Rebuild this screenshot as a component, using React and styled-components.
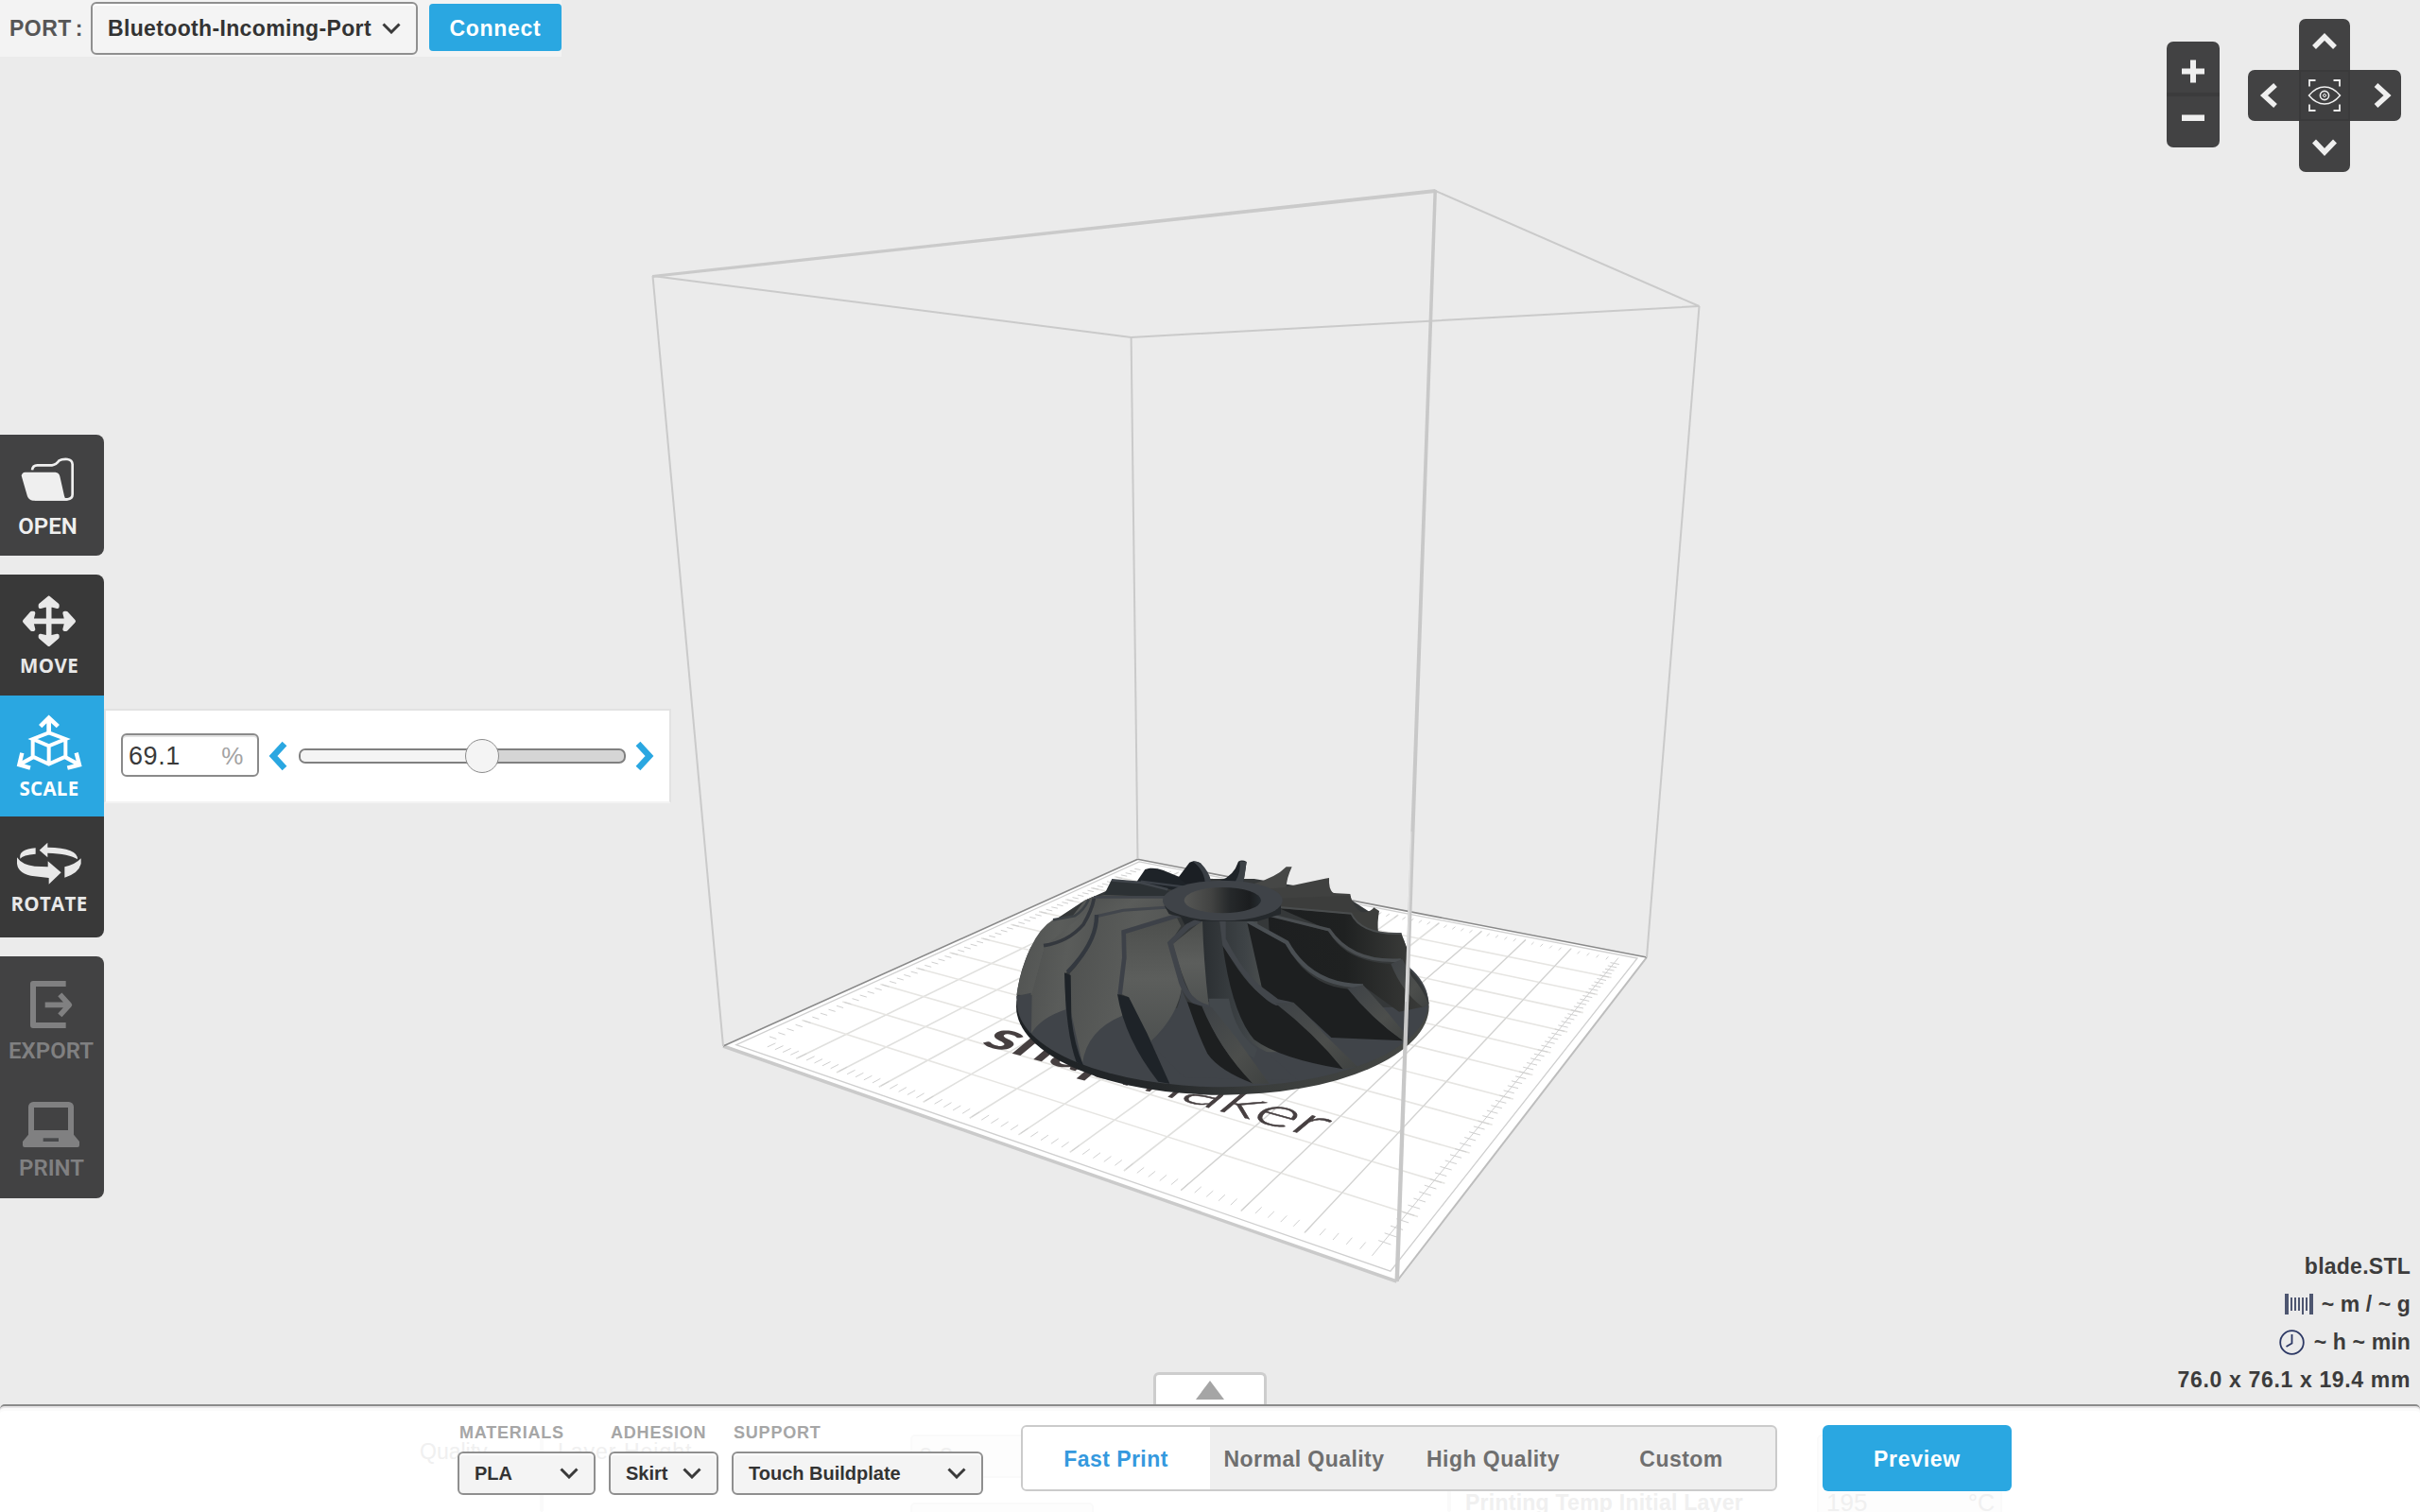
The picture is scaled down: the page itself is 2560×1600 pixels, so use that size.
import React from "react";
import styled, { createGlobalStyle } from "styled-components";

const GlobalStyle = createGlobalStyle`
  body { margin: 0; background: #ebebeb; overflow: hidden; }
  *, *::before, *::after { box-sizing: border-box; }
  button, input { font: inherit; }
`;

const ui = '"Liberation Sans", Arial, sans-serif';

const Page = styled.div`
  width: 2560px;
  height: 1600px;
  display: grid;
  grid-template-rows: 1486px 114px;
  background: #ebebeb;
  color: #333;
  font-family: ${ui};
  overflow: hidden;
`;

const Stage = styled.main`
  display: grid;
  grid-template: 1486px / 2560px;
  > * { grid-area: 1 / 1; }
`;

const SceneSvg = styled.svg`
  display: block;
  width: 2560px;
  height: 1486px;
`;

/* ---------- port bar ---------- */
const PortBar = styled.div`
  justify-self: start;
  align-self: start;
  display: flex;
  align-items: flex-start;
  width: 594px;
  height: 60px;
  background: #f3f3f3;
`;

const PortLabel = styled.label`
  width: 96px;
  padding-left: 10px;
  font-size: 23px;
  font-weight: 700;
  line-height: 61px;
  letter-spacing: 0.5px;
  word-spacing: -3px;
  color: #565656;
`;

const Select = styled.button`
  display: flex;
  align-items: center;
  justify-content: space-between;
  width: ${(p) => p.$w}px;
  height: ${(p) => p.$h}px;
  margin: ${(p) => p.$mt || 0}px 0 0;
  padding: ${(p) => p.$pad};
  border: 2px solid #8f8f8f;
  border-radius: 6px;
  background: #f4f4f4;
  box-shadow: inset 0 2px 0 #fff;
  color: #333;
  font-weight: 700;
  font-size: ${(p) => p.$fs}px;
  letter-spacing: ${(p) => p.$ls || 0}px;
  white-space: nowrap;
`;

const BlueButton = styled.button`
  width: ${(p) => p.$w}px;
  height: ${(p) => p.$h}px;
  margin: ${(p) => p.$m};
  padding: 2px 0 0;
  border: 0;
  border-radius: ${(p) => p.$r}px;
  background: #2aa7e1;
  color: #fff;
  font-weight: 700;
  font-size: 23px;
  letter-spacing: 0.7px;
`;

/* ---------- camera controls ---------- */
const CameraControls = styled.div`
  justify-self: end;
  align-self: start;
  display: flex;
  gap: 30px;
  padding: 20px 20px 0 0;
`;

const ZoomStack = styled.div`
  display: grid;
  grid-template-rows: 56px 56px;
  width: 56px;
  height: 112px;
  margin-top: 24px;
  border-radius: 7px;
  overflow: hidden;
  background: #424243;
`;

const ZoomKey = styled.button`
  padding: 0;
  border: 0;
  background: transparent;
  ${(p) => (p.$upper ? "border-bottom: 2px solid #3b3b3c;" : "border-top: 2px solid #3b3b3c;")}
  svg { display: block; width: 56px; height: 54px; }
`;

const Pad = styled.div`
  display: grid;
  grid-template: repeat(3, 54px) / repeat(3, 54px);
  grid-template-areas: ". up ." "left eye right" ". down .";
`;

const PadKey = styled.button`
  grid-area: ${(p) => p.$area};
  padding: 0;
  border: 0;
  border-radius: ${(p) => p.$radius};
  background: ${(p) => (p.$area === "eye" ? "#3f3f40" : "#424243")};
  box-shadow: ${(p) => (p.$area === "eye" ? "inset 0 0 0 2px #3a3a3b" : "none")};
  svg { display: block; width: 54px; height: 54px; }
`;

/* ---------- tool rail ---------- */
const Rail = styled.nav`
  justify-self: start;
  align-self: start;
  display: flex;
  flex-direction: column;
  gap: 20px;
  padding-top: 460px;
`;

const ToolGroup = styled.div`
  width: 110px;
  border-radius: 0 8px 8px 0;
  overflow: hidden;
  background: ${(p) => p.$bg};
`;

const Tool = styled.button`
  display: flex;
  flex-direction: column;
  align-items: flex-start;
  width: 110px;
  height: 128px;
  padding: 0;
  border: 0;
  background: ${(p) => (p.$active ? "#2aa7e1" : "transparent")};
  color: ${(p) => p.$color};
`;

const ToolIcon = styled.svg`
  display: block;
  flex: none;
  width: 110px;
  height: ${(p) => p.$h}px;
`;

const ToolLabel = styled.span`
  width: ${(p) => p.$w}px;
  text-align: center;
  white-space: nowrap;
  line-height: 24px;
  font-family: ${(p) => (p.$face === "roboto" ? 'Roboto, sans-serif' : '"Open Sans", "Noto Sans", sans-serif')};
  font-weight: ${(p) => (p.$face === "roboto" ? 600 : 700)};
  font-size: ${(p) => p.$fs}px;
  letter-spacing: ${(p) => p.$ls}px;
`;

/* ---------- scale panel ---------- */
const ScalePanel = styled.section`
  justify-self: start;
  align-self: start;
  display: flex;
  align-items: center;
  width: 600px;
  height: 100px;
  margin: 750px 0 0 110px;
  padding: 0 14px 0 16px;
  border: 2px solid #e2e2e2;
  border-bottom-color: #f3f3f3;
  background: #fff;
`;

const PercentField = styled.div`
  display: flex;
  flex: none;
  align-items: center;
  justify-content: space-between;
  width: 146px;
  height: 46px;
  margin-top: -2px;
  padding: 3px 14px 0 6px;
  border: 2px solid #8a8a8a;
  border-radius: 6px;
  box-shadow: inset 0 2px 0 #e3e3e3;
  font-size: 27px;
  letter-spacing: 0.6px;
  color: #3a3a3a;
`;

const Unit = styled.span`
  font-size: 26px;
  color: #a3a3a3;
`;

const Stepper = styled.svg`
  display: block;
  flex: none;
  width: 20px;
  height: 32px;
  margin: ${(p) => p.$m};
`;

const Track = styled.div`
  display: flex;
  flex: none;
  align-items: center;
  width: 346px;
  height: 16px;
  border: 2px solid #808080;
  border-radius: 7px;
  background: #d5d5d5;
`;

const Filled = styled.div`
  width: 176px;
  height: 12px;
  border-radius: 5px 0 0 5px;
  background: #f4f4f4;
`;

const Thumb = styled.div`
  flex: none;
  width: 36px;
  height: 36px;
  margin-left: -2px;
  border: 1.5px solid #8c8c8c;
  border-radius: 50%;
  background: #f4f4f4;
`;

/* ---------- model information ---------- */
const ModelInfo = styled.div`
  justify-self: end;
  align-self: end;
  display: flex;
  flex-direction: column;
  align-items: flex-end;
  padding: 0 10px 6px 0;
  font-size: 23px;
  font-weight: 700;
  color: #3c3c3c;
`;

const InfoLine = styled.div`
  display: flex;
  align-items: center;
  gap: ${(p) => p.$gap || 10}px;
  height: 40px;
  letter-spacing: ${(p) => p.$ls || 0}px;
  svg { display: block; flex: none; }
`;

/* ---------- bottom drawer ---------- */
const DrawerTab = styled.button`
  justify-self: start;
  align-self: end;
  display: flex;
  justify-content: center;
  width: 120px;
  height: 34px;
  margin-left: 1220px;
  padding: 0;
  border: 3px solid #cdcdcd;
  border-bottom: 0;
  border-radius: 6px 6px 0 0;
  background: #fff;
  svg { display: block; margin-top: 6px; }
`;

const Drawer = styled.footer`
  position: relative;
  display: flex;
  align-items: flex-start;
  height: 114px;
  padding: 20px 0 0 484px;
  border-top: 2px solid #8a8a8a;
  border-radius: 5px 5px 0 0;
  background: #fff;
  box-shadow: inset 0 2px 0 #e8e6e8, inset 0 5px 0 #fbfbfb;
`;

const Field = styled.div`
  position: relative;
  width: ${(p) => p.$w}px;
  margin-right: ${(p) => p.$mr}px;
`;

const FieldLabel = styled.div`
  height: 28px;
  padding-left: 2px;
  font-size: 18px;
  font-weight: 700;
  line-height: 17px;
  letter-spacing: 0.8px;
  white-space: nowrap;
  color: #a6a6a6;
`;

const Segments = styled.div`
  position: relative;
  display: grid;
  grid-template-columns: 198px 200px 200px 198px;
  width: 800px;
  height: 70px;
  border: 2px solid #cbcbcb;
  border-radius: 6px;
  overflow: hidden;
  background: #efefef;
`;

const Segment = styled.button`
  padding: 2px 1px 0 0;
  border: 0;
  background: ${(p) => (p.$on ? "#fff" : "transparent")};
  color: ${(p) => (p.$on ? "#3599de" : "#6f6f6f")};
  font-size: 23px;
  font-weight: 700;
  letter-spacing: 0.45px;
`;

const PreviewSlot = styled.div`
  position: relative;
`;

/* faint settings sheet showing through the drawer */
const GhostSheet = styled.div`
  position: absolute;
  inset: 0;
  overflow: hidden;
  font-size: 23px;
  color: #f0f0f0;
  white-space: nowrap;
`;

const GhostText = styled.span`
  position: absolute;
  left: ${(p) => p.$x}px;
  top: ${(p) => p.$y}px;
  line-height: 20px;
  font-size: ${(p) => p.$fs || 23}px;
  font-weight: ${(p) => (p.$bold ? 700 : 400)};
  letter-spacing: ${(p) => p.$ls || 0}px;
`;

const GhostBox = styled.span`
  position: absolute;
  left: ${(p) => p.$x}px;
  top: ${(p) => p.$y}px;
  width: ${(p) => p.$w}px;
  height: ${(p) => p.$h}px;
  border: 2px solid #fafafa;
  border-radius: 5px;
  background: #fdfdfd;
`;

const CaretSvg = styled.svg`
  display: block;
  flex: none;
`;

const Caret = () => (
  <CaretSvg width="20" height="12" viewBox="0 0 20 12">
    <path d="M1.5 1.5L10 10L18.5 1.5" fill="none" stroke="#3a3a3a" strokeWidth="3" />
  </CaretSvg>
);

const Stroke = ({ d, w = 6.5, size = "54 54" }) => (
  <svg viewBox={`0 0 ${size}`}>
    <path d={d} fill="none" stroke="#efefef" strokeWidth={w} />
  </svg>
);

/* ---------- build plate projection ---------- */
const corners = { L: [765, 1107], F: [1477.5, 1356], R: [1742, 1013], B: [1203.5, 909.3] };

function makeProjection({ L, F, R, B }) {
  const dx1 = F[0] - R[0], dx2 = B[0] - R[0], dx3 = L[0] - F[0] + R[0] - B[0];
  const dy1 = F[1] - R[1], dy2 = B[1] - R[1], dy3 = L[1] - F[1] + R[1] - B[1];
  const den = dx1 * dy2 - dx2 * dy1;
  const g = (dx3 * dy2 - dx2 * dy3) / den;
  const h = (dx1 * dy3 - dx3 * dy1) / den;
  const a = F[0] - L[0] + g * F[0], b = B[0] - L[0] + h * B[0];
  const d = F[1] - L[1] + g * F[1], e = B[1] - L[1] + h * B[1];
  return (u, v) => {
    const w = g * u + h * v + 1;
    return `${((a * u + b * v + L[0]) / w).toFixed(1)} ${((d * u + e * v + L[1]) / w).toFixed(1)}`;
  };
}

const project = makeProjection(corners);
const seg = (u1, v1, u2, v2) => `M${project(u1, v1)}L${project(u2, v2)}`;

const gridU = [];
const gridV = [];
for (let k = 0; k <= 12; k++) {
  const t = (5 + 10 * k) / 130;
  gridU.push(seg(t, 0.026, t, 0.974));
  gridV.push(seg(0.026, t, 0.974, t));
}
const ticks = [];
for (let k = 1; k <= 59; k++) {
  const t = (5 + 2 * k) / 130;
  ticks.push(seg(t, 0.03, t, 0.044), seg(t, 0.956, t, 0.97), seg(0.03, t, 0.044, t), seg(0.956, t, 0.97, t));
}
const ring = (m) => `M${project(m, m)}L${project(1 - m, m)}L${project(1 - m, 1 - m)}L${project(m, 1 - m)}Z`;

const Plate = () => (
  <g fill="none">
    <path d={ring(0)} fill="#fff" />
    <path d={gridU.slice(1, -1).join("")} stroke="#e0e0de" strokeWidth="1.6" />
    <path d={gridV.slice(1, -1).join("")} stroke="#e6e5e2" strokeWidth="1.6" />
    <path d={gridU.slice(9).join("")} stroke="#cfcfcf" strokeWidth="1" />
    <path d={ticks.join("")} stroke="#d0d0d0" strokeWidth="1" />
    <path d={ring(0.012)} stroke="#cfcfcf" strokeWidth="1.3" />
    <path d={seg(0, 0, 1, 0)} stroke="#cacaca" strokeWidth="3.5" />
    <path d={seg(1, 0, 1, 1)} stroke="#bdbdbd" strokeWidth="2" />
    <path d={seg(0, 0, 0, 1) + seg(0, 1, 1, 1)} stroke="#8a8a8a" strokeWidth="1.6" />
    <g fill="#463f40" transform="matrix(0.953 0.265 -0.6 0.5 1036 1105)" fontFamily="Lato, sans-serif" fontSize="68">
      <text fontWeight="700" textLength="152" lengthAdjust="spacingAndGlyphs">snap</text>
      <text x="153" fontWeight="300" textLength="218" lengthAdjust="spacingAndGlyphs" stroke="#463f40" strokeWidth="0.8">maker</text>
    </g>
  </g>
);

/* Impeller, drawn in a local space three times finer than the page. */
const SLATE = "#3f4348";
const NAVY = "#1e2328";
const INK = "#1d1f20";
const Model = () => (
  <g transform="translate(1040 880) scale(0.33333)">
    <defs>
      <linearGradient id="rim"><stop offset="0" stopColor="#1d2124" /><stop offset=".35" stopColor="#25282a" /><stop offset=".6" stopColor="#3a3d3c" /><stop offset="1" stopColor="#464845" /></linearGradient>
      <linearGradient id="bore"><stop offset="0" stopColor="#565755" /><stop offset=".35" stopColor="#424342" /><stop offset=".6" stopColor="#25282a" /><stop offset=".85" stopColor="#1b1d1f" /><stop offset="1" stopColor="#262c31" /></linearGradient>
      <linearGradient id="face" x1="0" x2="1" y1="0" y2=".3"><stop offset="0" stopColor="#4e504f" /><stop offset=".6" stopColor="#5a5c5a" /><stop offset="1" stopColor="#535554" /></linearGradient>
      <linearGradient id="faceV" x1="0" x2="0" y1="0" y2="1"><stop offset="0" stopColor="#4c4e4c" /><stop offset=".5" stopColor="#5c5e5c" /><stop offset="1" stopColor="#4e5150" /></linearGradient>
      <linearGradient id="column"><stop offset="0" stopColor="#2a2e31" /><stop offset=".4" stopColor="#3e4346" /><stop offset=".65" stopColor="#505351" /><stop offset="1" stopColor="#3a3d3c" /></linearGradient>
      <linearGradient id="dusk"><stop offset="0" stopColor="#1d1f20" /><stop offset=".5" stopColor="#1f2121" /><stop offset="1" stopColor="#3a3b39" /></linearGradient>
      <linearGradient id="lip" x1="0" x2="1" y1="0" y2="1"><stop offset="0" stopColor="#3e4246" /><stop offset=".6" stopColor="#4c4e4c" /><stop offset="1" stopColor="#3f4241" /></linearGradient>
    </defs>
    <ellipse cx="760" cy="555" rx="655" ry="281" fill="url(#rim)" />
    <ellipse cx="760" cy="543" rx="653" ry="268" fill="#404449" />
    <path d="M106 530Q112 450 150 370Q190 300 240 272L320 220L410 180H560L700 150H860L1100 190L1165 215L1250 270L1252 322L1328 325L1345 370L1355 440Q1400 480 1415 545L1400 556L1100 560L400 560L155 520Z" fill="#353839" />

    {/* far blades */}
    <path d="M488 158L514 120Q540 112 570 122L625 145L660 175L600 185Z" fill={NAVY} />
    <path d="M500 158L640 176" stroke="#3b4047" strokeWidth="7" />
    <path d="M620 145L655 98Q672 90 690 100L724 158L650 172Z" fill="#1b1f24" />
    <path d="M664 94Q680 92 692 102Q716 126 724 158L704 160Q700 120 664 94Z" fill="#3a3f45" />
    <path d="M752 156Q796 140 810 95Q822 88 836 96L826 162Z" fill={NAVY} />
    <path d="M814 94L836 96Q832 130 826 162L800 160Q820 125 814 94Z" fill="#3c4146" />
    <path d="M858 166Q930 145 962 112L980 112Q962 150 962 180L900 185Z" fill="#464746" />
    <path d="M895 182L950 178L1085 149L1098 147Q1096 180 1110 195L1165 198L1172 235L950 225Z" fill="#404140" />
    <path d="M940 212L1165 203Q1175 240 1200 256L1170 262L940 245Z" fill="#3c3d3c" />
    <path d="M1130 255L1200 255Q1230 258 1240 241L1257 252Q1250 290 1254 322L1220 310Z" fill="#3d3e3c" />
    <path d="M384 200L408 152L500 160L586 185L600 208Z" fill="#2c3134" />
    <path d="M408 154L500 162L586 184" fill="none" stroke="#40454b" strokeWidth="8" />
    <path d="M345 208L385 202L590 208V245L360 265L330 250Z" fill="url(#face)" />
    <path d="M352 208L590 208" stroke="#40444a" strokeWidth="8" />

    {/* left blades */}
    <path d="M106 518Q118 440 150 370Q180 305 222 280L284 268L322 218L350 206L345 260Q280 350 195 370L155 520Z" fill="url(#face)" />
    <path d="M222 280L290 268Q320 250 335 216" fill="none" stroke="#3c4145" strokeWidth="8" />
    <path d="M155 512L195 365L345 240L362 262L350 345L262 450V565Q185 590 153 640Z" fill="url(#face)" />
    <path d="M152 512L106 522Q106 580 150 640Z" fill="#404449" />
    <path d="M192 362Q270 350 318 295Q345 250 352 212" fill="none" stroke="#34383e" strokeWidth="11" />
    <path d="M275 450Q345 380 362 262L445 246L600 245L612 266L445 320L452 400L430 512L442 584Q330 630 315 735L276 560Z" fill="url(#face)" />
    <path d="M355 270L445 250L590 240" fill="none" stroke="#42464c" strokeWidth="9" />
    <path d="M360 264Q362 350 268 446" fill="none" stroke="#33383f" strokeWidth="13" />
    <path d="M258 448L278 456L280 590Q290 680 318 742L296 732Q262 640 258 448Z" fill={NAVY} />
    <path d="M448 320L612 268L628 300L594 352L632 485Q622 580 532 666L462 526L434 514Z" fill="url(#faceV)" />
    <path d="M625 264L446 319L448 400L434 516" fill="none" stroke="#3d4148" strokeWidth="14" />
    <path d="M426 516L462 526L520 640L592 800L556 794Q450 660 426 516Z" fill={NAVY} />

    {/* hub column and front blades */}
    <path d="M692 275H870L885 500L1040 700L720 700L700 560Z" fill="url(#column)" />
    <path d="M655 560Q700 520 715 540L780 560Q800 650 900 700L1000 790L640 780Q550 700 532 666Q620 600 630 500Z" fill="#404449" />
    <path d="M715 530H780Q800 640 870 690L860 720L740 640Z" fill="#43484c" />
    <path d="M602 356L696 282Q700 420 716 552L668 534Q632 470 602 356Z" fill="url(#faceV)" />
    <path d="M624 264L690 280L640 296Z" fill="#24282b" />
    <path d="M690 280L650 300L594 354L630 480Q655 545 716 560" fill="none" stroke="#40444a" strokeWidth="17" />
    <path d="M648 540L700 556Q740 680 858 800Q750 760 712 705Q680 640 648 540Z" fill={INK} />
    <path d="M694 554L726 558L800 650L908 800H856Q750 690 694 554Z" fill="url(#lip)" />
    <path d="M760 358Q850 520 930 544L990 560L1142 754Q940 720 860 660Q790 580 760 358Z" fill={INK} />
    <path d="M750 280H770V340Q860 520 985 540L930 552Q870 530 760 362Z" fill="#42464b" />
    <path d="M926 544L990 542L1090 650L1188 746L1142 754Q1050 640 926 544Z" fill="url(#lip)" />
    <path d="M838 288L960 356Q1030 490 1160 500Q1240 600 1334 664L1105 654L985 542L936 532L884 492Z" fill={INK} />
    <path d="M905 266L1096 316Q1150 415 1300 420Q1340 500 1400 556L1320 572L1206 490Q1040 480 962 352L908 320Z" fill="url(#dusk)" />
    <path d="M940 244L1170 262Q1200 325 1325 325Q1352 370 1352 440L1330 408Q1180 420 1096 312Z" fill="url(#dusk)" />
    <path d="M940 240L1168 260Q1200 328 1328 324" fill="none" stroke="#4a4d4e" strokeWidth="6" />
    <path d="M905 264L1098 312Q1170 418 1326 408" fill="none" stroke="#4a4e51" strokeWidth="10" />
    <path d="M840 284L964 352Q1040 490 1206 490" fill="none" stroke="#4a4f53" strokeWidth="13" />
    <path d="M1156 498L1206 487L1280 570L1348 652L1332 664Q1230 590 1156 498Z" fill="url(#lip)" />
    <path d="M1294 420L1330 404L1360 460Q1396 500 1414 548L1396 558Q1330 510 1294 420Z" fill="url(#lip)" />

    {/* hub */}
    <path d="M575 235H945V262L870 285H690L590 262Z" fill="#25292c" />
    <ellipse cx="760" cy="219" rx="190" ry="64" fill={SLATE} />
    <ellipse cx="760" cy="218" rx="122" ry="41" fill="url(#bore)" />
  </g>
);

const Scene = () => (
  <SceneSvg viewBox="0 0 2560 1486">
    <Plate />
    <g stroke="#cacaca" fill="none">
      <path d="M690.5 292L765 1107" strokeWidth="2" />
      <path d="M1196.6 357L1203.5 909" strokeWidth="2" />
      <path d="M1797.5 324L1742 1013" strokeWidth="2" />
      <path d="M690.5 292L1196.6 357L1797.5 324L1518.5 202" strokeWidth="2" />
    </g>
    <path d="M690 291L1518.5 200L1518.5 204L690 294Z" fill="#cacaca" />
    <Model />
    <path d="M1516.5 201H1520L1480 1356H1475.5Z" fill="#c8c8c8" />
    <path d="M1492.8 880L1487.3 1060" stroke="#dedede" strokeWidth="1.4" />
  </SceneSvg>
);

const tools = {
  open: (
    <>
      <path d="M102 112Q104 97 118 97H165Q178 96 188 82Q196 77 214 78Q229 80 230 94V190Q230 204 214 205H110" fill="none" stroke="currentColor" strokeWidth="8" />
      <path d="M68 130Q70 120 80 119H176Q187 120 190 132L204 194Q208 207 216 209H104Q92 208 87 196Z" fill="currentColor" />
    </>
  ),
  move: (
    <g stroke="currentColor" fill="currentColor" strokeLinejoin="round">
      <path d="M155 90V206M97 148H214" strokeWidth="17" />
      <path d="M155 74L182 97V102L165 98H145L128 102V97ZM155 222L182 199V194L165 198H145L128 194V199ZM78 148L101 122H106L102 138V158L106 174H101ZM234 148L210 122H205L209 138V158L205 174H210Z" strokeWidth="12" />
    </g>
  ),
  scale: (
    <g stroke="currentColor" fill="none" strokeWidth="13">
      <path d="M155 72V122M128 98L155 71L184 98" strokeWidth="14" />
      <path d="M155 118L208 138L155 160L104 138ZM104 138V194L155 218L208 194V138M155 160V218" strokeWidth="12" />
      <path d="M104 196L64 218M70 182L61 220L96 230M208 196L248 218M242 182L252 220L214 230" />
    </g>
  ),
  rotate: (
    <path fill="currentColor" d="M54 130Q70 154 110 158L152 160V142L194 178L155 215V195L110 190Q58 184 54 150ZM205 160Q240 152 257 133V150Q250 180 205 194ZM64 134Q58 104 113 100V119Q72 122 64 134ZM125 107L151 83V98Q248 100 246 136Q220 118 151 116V130Z" />
  ),
  export: (
    <g stroke="currentColor" fill="none" strokeWidth="18" strokeLinejoin="round">
      <path d="M209 87H105V219H209" />
      <path d="M143 154H216M190 121L220 154L190 187" strokeWidth="17" />
    </g>
  ),
  print: (
    <>
      <rect x="99" y="87" width="126" height="92" rx="7" fill="none" stroke="currentColor" strokeWidth="18" />
      <path d="M90 168H234V182L252 204V216Q252 222 246 222H78Q72 222 72 216V204L90 182Z" fill="currentColor" />
      <rect x="137" y="193" width="49" height="11" fill="#47484a" />
    </>
  ),
};

const ToolButton = ({ name, label, base, w, face = "roboto", fs = 24, ls = 0, color, active }) => (
  <Tool $active={active} $color={color}>
    <ToolIcon $h={base - 20} viewBox={`0 0 330 ${(base - 20) * 3}`}>{tools[name]}</ToolIcon>
    <ToolLabel $w={w} $face={face} $fs={fs} $ls={ls}>{label}</ToolLabel>
  </Tool>
);

const qualities = ["Fast Print", "Normal Quality", "High Quality", "Custom"];
const fields = [
  { label: "MATERIALS", value: "PLA", w: 146, mr: 14 },
  { label: "ADHESION", value: "Skirt", w: 116, mr: 14 },
  { label: "SUPPORT", value: "Touch Buildplate", w: 266, mr: 40 },
];

export default function App() {
  return (
    <>
      <GlobalStyle />
      <Page>
        <Stage>
          <Scene />

          <PortBar>
            <PortLabel>PORT :</PortLabel>
            <Select $w={346} $h={56} $mt={2} $pad="0 16px 0 16px" $fs={23} $ls={0.35}>
              Bluetooth-Incoming-Port
              <Caret />
            </Select>
            <BlueButton $w={140} $h={50} $r={4} $m="4px 0 0 12px">Connect</BlueButton>
          </PortBar>

          <CameraControls>
            <ZoomStack>
              <ZoomKey $upper><Stroke size="56 54" d="M16 31.5H40M28 19.5V43.5" w={6} /></ZoomKey>
              <ZoomKey><Stroke size="56 54" d="M16 22.7H40" w={6.4} /></ZoomKey>
            </ZoomStack>
            <Pad>
              <PadKey $area="up" $radius="7px 7px 0 0"><Stroke d="M16 30L27 19L38 30" w={5.5} /></PadKey>
              <PadKey $area="left" $radius="7px 0 0 7px"><Stroke d="M29 16L17 27L29 38" w={5.5} /></PadKey>
              <PadKey $area="eye" $radius="0">
                <svg viewBox="0 0 54 54" fill="none" stroke="#efefef">
                  <path d="M11 17.5V11H17.5M36.5 11H43V17.5M43 36.5V43H36.5M17.5 43H11V36.5" strokeWidth="1.8" />
                  <path d="M10.5 27Q18 18 27 18T43.5 27Q36 36 27 36T10.5 27Z" strokeWidth="1.5" />
                  <circle cx="27" cy="27" r="4.6" strokeWidth="1.6" />
                  <circle cx="27" cy="27" r="1.5" strokeWidth="1" />
                </svg>
              </PadKey>
              <PadKey $area="right" $radius="0 7px 7px 0"><Stroke d="M27.5 16L39.5 27L27.5 38" w={5.5} /></PadKey>
              <PadKey $area="down" $radius="0 0 7px 7px"><Stroke d="M16 21.5L27 33L38 21.5" w={5.5} /></PadKey>
            </Pad>
          </CameraControls>

          <Rail>
            <ToolGroup $bg="#424243">
              <ToolButton name="open" label="OPEN" base={105} w={101} color="#efefef" />
            </ToolGroup>
            <ToolGroup $bg="#393939">
              <ToolButton name="move" label="MOVE" base={104} w={104} face="open" fs={20.5} ls={0.4} color="#e8e8e8" />
              <ToolButton name="scale" label="SCALE" base={106} w={104} face="open" fs={20.5} ls={0.3} color="#fff" active />
              <ToolButton name="rotate" label="ROTATE" base={99.5} w={104} face="open" fs={20.5} ls={0.3} color="#e8e8e8" />
            </ToolGroup>
            <ToolGroup $bg="#424243">
              <ToolButton name="export" label="EXPORT" base={108} w={108} color="#808081" />
              <ToolButton name="print" label="PRINT" base={104} w={109} color="#808081" />
            </ToolGroup>
          </Rail>

          <ScalePanel>
            <PercentField>69.1<Unit>%</Unit></PercentField>
            <Stepper $m="0 12px 0 10px" viewBox="0 0 20 32">
              <path d="M17 3L5 16L17 29" fill="none" stroke="#2aa7e1" strokeWidth="6.5" />
            </Stepper>
            <Track><Filled /><Thumb /></Track>
            <Stepper $m="0 0 0 10px" viewBox="0 0 20 32">
              <path d="M3 3L15 16L3 29" fill="none" stroke="#2aa7e1" strokeWidth="6.5" />
            </Stepper>
          </ScalePanel>

          <ModelInfo>
            <InfoLine $ls={0.25}>blade.STL</InfoLine>
            <InfoLine $ls={0.1} $gap={9}>
              <svg width="30" height="22" viewBox="0 0 30 22" fill="#4e5670">
                <path d="M0 0H4V22H0ZM26 0H30V22H26ZM6 4H8V18H6ZM10 4H12V18H10ZM14 4H16V18H14ZM18 4H20V22H18ZM22 4H24V18H22Z" />
              </svg>
              ~ m / ~ g
            </InfoLine>
            <InfoLine $ls={0.15}>
              <svg width="27" height="27" viewBox="0 0 27 27" fill="none" stroke="#2c3864" strokeWidth="1.8">
                <circle cx="13.5" cy="13.5" r="12.3" />
                <path d="M13.5 5V14.5L7.5 18" />
              </svg>
              ~ h ~ min
            </InfoLine>
            <InfoLine $ls={0.65}>76.0 x 76.1 x 19.4 mm</InfoLine>
          </ModelInfo>

          <DrawerTab>
            <svg width="30" height="20" viewBox="0 0 30 20"><path d="M15 0L30 20H0Z" fill="#a5a5a5" /></svg>
          </DrawerTab>
        </Stage>

        <Drawer>
          <GhostSheet>
            <GhostText $x={444} $y={38}>Quality</GhostText>
            <GhostBox $x={571} $y={34} $w={2} $h={78} />
            <GhostText $x={590} $y={38} $ls={1}>Layer Height</GhostText>
            <GhostBox $x={963} $y={30} $w={194} $h={46} />
            <GhostText $x={972} $y={43} $fs={26}>0.2</GhostText>
            <GhostBox $x={963} $y={102} $w={194} $h={46} />
            <GhostBox $x={1531} $y={60} $w={2} $h={52} />
            <GhostText $x={1550} $y={92} $bold $ls={0.25}>Printing Temp Initial Layer</GhostText>
            <GhostBox $x={1922} $y={30} $w={196} $h={130} />
            <GhostText $x={1932} $y={92} $fs={26}>195</GhostText>
            <GhostText $x={2082} $y={92} $fs={25}>°C</GhostText>
          </GhostSheet>
          {fields.map((f) => (
            <Field key={f.label} $w={f.w} $mr={f.mr}>
              <FieldLabel>{f.label}</FieldLabel>
              <Select $w={f.w} $h={46} $pad="0 16px 0 16px" $fs={20}>
                {f.value}
                <Caret />
              </Select>
            </Field>
          ))}
          <Segments>
            {qualities.map((q, i) => (
              <Segment key={q} $on={i === 0}>{q}</Segment>
            ))}
          </Segments>
          <PreviewSlot>
            <BlueButton $w={200} $h={70} $r={6} $m="0 0 0 48px">Preview</BlueButton>
          </PreviewSlot>
        </Drawer>
      </Page>
    </>
  );
}
